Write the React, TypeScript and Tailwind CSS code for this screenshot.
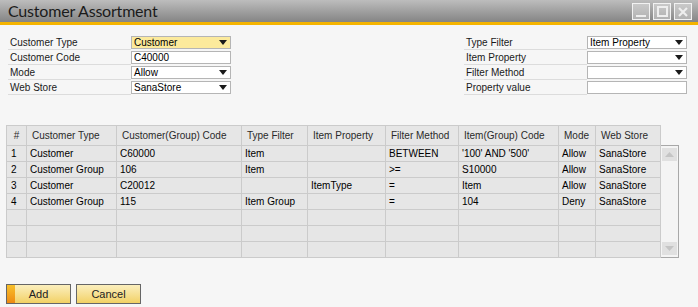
import React from "react";

const rows = [
  ["1", "Customer", "C60000", "Item", "", "BETWEEN", "'100' AND '500'", "Allow", "SanaStore"],
  ["2", "Customer Group", "106", "Item", "", ">=", "S10000", "Allow", "SanaStore"],
  ["3", "Customer", "C20012", "", "ItemType", "=", "Item", "Allow", "SanaStore"],
  ["4", "Customer Group", "115", "Item Group", "", "=", "104", "Deny", "SanaStore"],
  ["", "", "", "", "", "", "", "", ""],
  ["", "", "", "", "", "", "", "", ""],
  ["", "", "", "", "", "", "", "", ""],
];

const headers = [
  "#",
  "Customer Type",
  "Customer(Group) Code",
  "Type Filter",
  "Item Property",
  "Filter Method",
  "Item(Group) Code",
  "Mode",
  "Web Store",
];

const Arrow = () => (
  <svg width="8" height="5" viewBox="0 0 8 5" className="shrink-0">
    <polygon points="0,0 8,0 4,5" fill="#1a1a1a" />
  </svg>
);

const Field = ({
  label,
  value,
  dropdown,
  yellow,
}: {
  label: string;
  value?: string;
  dropdown?: boolean;
  yellow?: boolean;
}) => (
  <div className="flex h-[15px] items-start">
    <div className="flex h-[14px] w-[123px] items-center border-b border-[#dcdcdc] pl-[2px] text-[#1a1a1a]">
      {label}
    </div>
    <div
      className={`flex h-[13px] w-[100px] items-center justify-between border border-[#b5b5b5] pl-[2px] pr-[3px] ${
        yellow ? "bg-[#fcea9c]" : "bg-white"
      }`}
    >
      <span className="text-black">{value}</span>
      {dropdown && <Arrow />}
    </div>
  </div>
);

const WinButton = ({ children }: { children: React.ReactNode }) => (
  <div className="flex h-[17px] w-[18px] items-center justify-center border border-[#f2f2f2] bg-gradient-to-b from-[#c9c9c9] to-[#b2b2b2]">
    {children}
  </div>
);

export default function App() {
  return (
    <div className="h-[307px] w-[698px] overflow-hidden bg-[#f6f6f6] font-['Liberation_Sans',Arial,sans-serif] text-[10px] leading-none">
      {/* title bar */}
      <div className="flex h-[22px] items-center justify-between bg-gradient-to-b from-[#bdbdbd] to-[#858585] pl-[8px] pr-[6px]">
        <span className="font-['Lato',sans-serif] text-[16px] tracking-[-0.2px] text-[#1b1b1b]">
          Customer Assortment
        </span>
        <div className="flex gap-[3px] pt-[1px]">
          <WinButton>
            <div className="mt-[8px] h-[2px] w-[10px] bg-[#eeeeee]" />
          </WinButton>
          <WinButton>
            <div className="h-[11px] w-[11px] border-[2px] border-[#eeeeee]" />
          </WinButton>
          <WinButton>
            <svg width="10" height="10" viewBox="0 0 10 10">
              <path d="M1 1 L9 9 M9 1 L1 9" stroke="#eeeeee" strokeWidth="2.2" />
            </svg>
          </WinButton>
        </div>
      </div>
      <div className="h-[3px] bg-[#f5b400]" />

      {/* form */}
      <div className="flex justify-between pl-[8px] pr-[11px] pt-[11px]">
        <div className="flex flex-col">
          <Field label="Customer Type" value="Customer" dropdown yellow />
          <Field label="Customer Code" value="C40000" />
          <Field label="Mode" value="Allow" dropdown />
          <Field label="Web Store" value="SanaStore" dropdown />
        </div>
        <div className="flex flex-col">
          <Field label="Type Filter" value="Item Property" dropdown />
          <Field label="Item Property" dropdown />
          <Field label="Filter Method" dropdown />
          <Field label="Property value" />
        </div>
      </div>

      {/* grid */}
      <div className="mt-[29px] flex pl-[6px]">
        <div className="grid grid-cols-[20px_90px_125px_66px_78px_73px_100px_37px_65px] border-l border-t border-[#cbcbcb] bg-[#e6e6e6]">
          {headers.map((h, i) => (
            <div
              key={h}
              className={`flex h-[20px] items-center border-b border-r border-[#cbcbcb] text-[#2a2a2a] ${
                i === 0 ? "justify-center" : "pl-[5px]"
              }`}
            >
              {h}
            </div>
          ))}
          {rows.map((r, ri) =>
            r.map((c, ci) => (
              <div
                key={`${ri}-${ci}`}
                className={`flex h-[16px] items-center border-b border-r border-[#cbcbcb] text-black ${
                  ci === 0 ? "pl-[4px]" : "pl-[3px]"
                }`}
              >
                {c}
              </div>
            ))
          )}
        </div>
        <div className="mt-[20px] flex h-[113px] w-[18px] flex-col justify-between border-b border-r border-t border-[#a8a8a8] bg-[#f4f4f4] px-[1px] py-[2px]">
          <div className="flex h-[13px] items-center justify-center bg-[#e0e0e0]">
            <svg width="9" height="5" viewBox="0 0 9 5">
              <polygon points="0,5 9,5 4.5,0" fill="#c4c4c4" />
            </svg>
          </div>
          <div className="flex h-[13px] items-center justify-center bg-[#e0e0e0]">
            <svg width="9" height="5" viewBox="0 0 9 5">
              <polygon points="0,0 9,0 4.5,5" fill="#c4c4c4" />
            </svg>
          </div>
        </div>
      </div>

      {/* buttons */}
      <div className="mt-[26px] flex gap-[5px] pl-[6px]">
        <button className="relative flex h-[20px] w-[65px] items-center justify-center overflow-hidden border border-[#666666] bg-gradient-to-b from-[#fbefbd] to-[#f2d163] text-[11px] text-[#222222]">
          <span className="absolute left-0 top-0 h-full w-[8px] bg-gradient-to-b from-[#f7c02a] to-[#ee8a12]" />
          Add
        </button>
        <button className="flex h-[20px] w-[65px] items-center justify-center border border-[#666666] bg-gradient-to-b from-[#fbefbd] to-[#f2d163] text-[11px] text-[#222222]">
          Cancel
        </button>
      </div>
    </div>
  );
}
